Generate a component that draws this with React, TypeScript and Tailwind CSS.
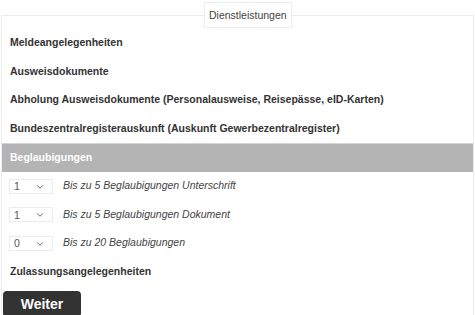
import { ChevronDown } from "lucide-react";

const sections = [
  "Meldeangelegenheiten",
  "Ausweisdokumente",
  "Abholung Ausweisdokumente (Personalausweise, Reisepässe, eID-Karten)",
  "Bundeszentralregisterauskunft (Auskunft Gewerbezentralregister)",
];

const options = [
  { value: "1", label: "Bis zu 5 Beglaubigungen Unterschrift" },
  { value: "1", label: "Bis zu 5 Beglaubigungen Dokument" },
  { value: "0", label: "Bis zu 20 Beglaubigungen" },
];

function Select({ value }: { value: string }) {
  return (
    <div className="relative h-[15px] w-[44px]">
      <select
        defaultValue={value}
        className="h-full w-full appearance-none border border-[#ececec] bg-white pl-[4px] text-[10.5px] leading-none text-[#555] outline-none"
      >
        {Array.from({ length: 21 }, (_, i) => (
          <option key={i} value={String(i)}>
            {i}
          </option>
        ))}
      </select>
      <ChevronDown
        size={10}
        strokeWidth={2.2}
        className="pointer-events-none absolute right-[8px] top-[3px] text-[#555]"
      />
    </div>
  );
}

export default function App() {
  return (
    <div className="h-[315px] w-[475px] overflow-hidden bg-white font-['Liberation_Sans',Arial,sans-serif] text-[10.5px] text-[#333]">
      <fieldset className="ml-[1px] mr-[1px] mt-[2px] min-h-[330px] border border-[#ececec] px-0">
        <legend className="ml-[202px] h-[26px] border border-[#ececec] px-[4px] leading-[24px] text-[#444]">
          Dienstleistungen
        </legend>
        <div className="pt-[1px]">
          {sections.map((s) => (
            <div key={s} className="flex h-[28.5px] items-center pl-[8px] font-bold">
              {s}
            </div>
          ))}
          <div className="flex h-[29px] items-center border-t border-[#d4d4d4] bg-[#b4b4b4] pl-[8px] font-bold text-white">
            Beglaubigungen
          </div>
          {options.map((o, i) => (
            <div key={i} className="flex h-[28.5px] items-center gap-[10px] pl-[7px]">
              <Select value={o.value} />
              <span className="italic text-[#444]">{o.label}</span>
            </div>
          ))}
          <div className="flex h-[28.5px] items-center pl-[8px] font-bold">
            Zulassungsangelegenheiten
          </div>
        </div>
        <button className="ml-[1px] mt-[5px] h-[26px] w-[78px] rounded-[4px] bg-[#333] text-[14px] font-bold text-white">
          Weiter
        </button>
      </fieldset>
    </div>
  );
}
